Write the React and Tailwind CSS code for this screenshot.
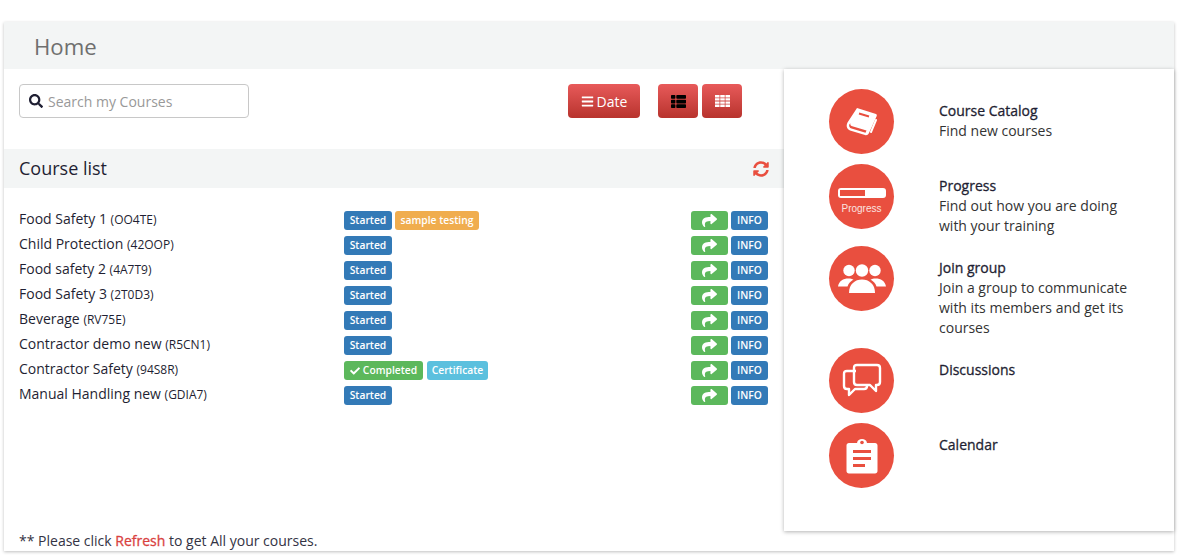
import { FaBars, FaCheck, FaSearch, FaShare, FaSyncAlt, FaThList } from 'react-icons/fa'

const courses = [
  { name: 'Food Safety 1', code: 'OO4TE', extra: 'sample' },
  { name: 'Child Protection', code: '42OOP' },
  { name: 'Food safety 2', code: '4A7T9' },
  { name: 'Food Safety 3', code: '2T0D3' },
  { name: 'Beverage', code: 'RV75E' },
  { name: 'Contractor demo new', code: 'R5CN1' },
  { name: 'Contractor Safety', code: '94S8R', completed: true },
  { name: 'Manual Handling new', code: 'GDIA7' },
]

function Badge({ className, children }) {
  return (
    <span className={`h-[19px] flex items-center justify-center rounded-[3px] text-[10.300px] font-semibold text-white ${className}`}>
      {children}
    </span>
  )
}

function CourseRow({ course }) {
  return (
    <div className="h-[25px] flex items-start">
      <div className="w-[325px] pt-[1px] text-[14px] leading-[20px] text-[#1f1f33]">
        {course.name} <span className="text-[12px]">({course.code})</span>
      </div>
      <div className="flex-1 flex gap-[3px] pt-[3px]">
        {course.completed ? (
          <>
            <Badge className="w-[79px] gap-[3px] bg-[#5cb85c]"><FaCheck className="text-[10px]" />Completed</Badge>
            <Badge className="ml-[1px] w-[61px] bg-[#5bc0de]">Certificate</Badge>
          </>
        ) : (
          <>
            <Badge className="w-[48px] bg-[#337ab7]">Started</Badge>
            {course.extra && <Badge className="w-[84px] bg-[#f0ad4e]">sample testing</Badge>}
          </>
        )}
      </div>
      <div className="flex gap-[3px] pt-[3px]">
        <Badge className="w-[37px] bg-[#5cb85c]"><FaShare className="text-[15px]" /></Badge>
        <Badge className="w-[37px] bg-[#337ab7]">INFO</Badge>
      </div>
    </div>
  )
}

function BookIcon() {
  return (
    <svg width="34" height="32" viewBox="0 0 34 32" fill="none">
      <path d="M12 2 L31 8 C32 8.500 32 9.500 31.500 10.500 L24 27 C23 29 21.500 29.500 20 29 L5 24.500 C1.500 23 1 19.500 2.500 16.500 Z" fill="white" />
      <path d="M4.500 18 C3.500 20 4.500 22 6.500 22.600 L20.500 26.800 L21.500 24.500 L6.500 20 C5.500 19.600 5 18.800 5.500 17.500 Z" fill="#e94f3f" />
      <path d="M14 7.500 L24 10.500" stroke="#e94f3f" strokeWidth="2" />
      <path d="M26 26 L31 14" stroke="white" strokeWidth="2" strokeLinecap="round" />
    </svg>
  )
}

function TableIcon() {
  return (
    <svg width="15" height="12" viewBox="0 0 15 12" fill="white">
      <path d="M0 0 H4.500 V2.500 H0 Z M5.250 0 H9.750 V2.500 H5.250 Z M10.500 0 H15 V2.500 H10.500 Z" />
      <path d="M0 3.200 H4.500 V5.600 H0 Z M5.250 3.200 H9.750 V5.600 H5.250 Z M10.500 3.200 H15 V5.600 H10.500 Z" />
      <path d="M0 6.400 H4.500 V8.800 H0 Z M5.250 6.400 H9.750 V8.800 H5.250 Z M10.500 6.400 H15 V8.800 H10.500 Z" />
      <path d="M0 9.500 H4.500 V12 H0 Z M5.250 9.500 H9.750 V12 H5.250 Z M10.500 9.500 H15 V12 H10.500 Z" />
    </svg>
  )
}

function ProgressIcon() {
  return (
    <div className="flex flex-col items-center">
      <div className="w-[48px] h-[10px] rounded-[3px] bg-white p-[2px] mt-[10px]">
        <div className="w-[25px] h-full bg-[#e94f3f]" />
      </div>
      <div className="mt-[5px] text-[10px] leading-[12px] text-[#fbe3e0] font-['Liberation_Sans',sans-serif]">Progress</div>
    </div>
  )
}

function GroupIcon() {
  return (
    <svg width="48" height="30" viewBox="0 0 48 30" fill="white">
      <circle cx="11" cy="6.500" r="5.700" />
      <circle cx="24" cy="6.500" r="6.200" />
      <circle cx="37" cy="6.500" r="5.700" />
      <path d="M0 22.500 C1 17 5 14.500 10.500 14.500 C12.500 14.500 14 15 15.500 15.600 C12.500 17.500 10.500 19.500 9.500 22.500 Z" />
      <path d="M48 22.500 C47 17 43 14.500 37.500 14.500 C35.500 14.500 34 15 32.500 15.600 C35.500 17.500 37.500 19.500 38.500 22.500 Z" />
      <path d="M11 29 C11 20 17 15.500 24 15.500 C31 15.500 37 20 37 29 Z" />
    </svg>
  )
}

function ChatIcon() {
  return (
    <svg width="40" height="36" viewBox="0 0 40 36" fill="none" stroke="white" strokeWidth="2.400" strokeLinejoin="round">
      <path d="M14 8 H5 C3 8 2 9 2 11 V23 C2 25 3 26 5 26 H7 V32 L13 26 H22 C24 26 25 25 25 23" />
      <path d="M15 2 H35 C37 2 38 3 38 5 V19 C38 21 37 22 35 22 H34 V28 L28 22 H15 C13 22 12 21 12 19 V5 C12 3 13 2 15 2 Z" />
    </svg>
  )
}

function ClipboardIcon() {
  return (
    <svg width="32" height="36" viewBox="0 0 32 36">
      <path d="M3 5 H11 C11.500 2 13.500 1 16 1 C18.500 1 20.500 2 21 5 H29 C30.500 5 31.500 6 31.500 7.500 V33 C31.500 34.500 30.500 35.500 29 35.500 H3 C1.500 35.500 0.500 34.500 0.500 33 V7.500 C0.500 6 1.500 5 3 5 Z" fill="white" />
      <circle cx="16" cy="4.500" r="1.800" fill="#e94f3f" />
      <path d="M7 12 H25 V15 H7 Z M7 19 H25 V22 H7 Z M7 26 H19 V29 H7 Z" fill="#e94f3f" />
    </svg>
  )
}

const links = [
  { h: 'h-[75px]', icon: <BookIcon />, title: 'Course Catalog', lines: ['Find new courses'] },
  { h: 'h-[82px]', icon: <ProgressIcon />, title: 'Progress', lines: ['Find out how you are doing', 'with your training'] },
  { h: 'h-[102px]', icon: <GroupIcon />, title: 'Join group', lines: ['Join a group to communicate', 'with its members and get its', 'courses'] },
  { h: 'h-[75px]', icon: <ChatIcon />, title: 'Discussions', lines: [] },
  { h: 'h-[75px]', icon: <ClipboardIcon />, title: 'Calendar', lines: [] },
]

export default function App() {
  return (
    <div className="h-[560px] bg-white pt-[22px] pl-1 font-['Open_Sans',sans-serif] overflow-hidden">
      <div className="w-[1170px] h-[529px] shadow-[0_1px_3px_rgba(0,0,0,0.25)]">
        <div className="h-[47px] bg-[#f3f5f5] pl-[30px] text-[22.200px] leading-[49px] text-[#6f6f6f]">Home</div>
        <div className="flex items-start">
          {/* Left column */}
          <div className="w-[780px] h-[482px] flex flex-col">
            <div className="h-[80px] flex items-start pl-[15px] pt-[15px]">
              <div className="w-[230px] h-[34px] flex items-center gap-[5px] pl-[9px] border border-[#c8c8c8] rounded-[4px]">
                <FaSearch className="text-[14px] text-[#1f1f33]" />
                <span className="text-[14px] text-[#999999]">Search my Courses</span>
              </div>
              <button className="ml-[319px] w-[72px] h-[34px] flex items-center justify-center gap-[3px] rounded-[4px] bg-linear-to-b from-[#e85a5a] to-[#b8332d] text-white text-[14px]">
                <FaBars className="text-[13px]" />Date
              </button>
              <button className="ml-[18px] w-[40px] h-[34px] flex items-center justify-center rounded-[4px] bg-linear-to-b from-[#e85a5a] to-[#b8332d] text-black text-[15px]">
                <FaThList />
              </button>
              <button className="ml-[4px] w-[40px] h-[34px] flex items-center justify-center rounded-[4px] bg-linear-to-b from-[#e85a5a] to-[#b8332d]">
                <TableIcon />
              </button>
            </div>
            <div className="h-[39px] flex items-center justify-between bg-[#f3f5f5] pl-[15px] pr-[15px]">
              <span className="text-[18px] text-[#1f1f33]">Course list</span>
              <FaSyncAlt className="text-[16px] text-[#e94f3f]" />
            </div>
            <div className="pt-[20px] pl-[15px] pr-[16px] flex-1">
              {courses.map((c) => <CourseRow key={c.code} course={c} />)}
            </div>
            <div className="pl-[15px] h-[20px] text-[14px] leading-[20px] text-[#333344]">
              ** Please click <span className="[-webkit-text-stroke:0.3px] text-[#d9423f]">Refresh</span> to get All your courses.
            </div>
          </div>

          {/* Right column */}
          <div className="w-[390px] h-[462px] pt-[20px] pl-[45px] shadow-[0_1px_4px_rgba(0,0,0,0.3)] bg-white">
            {links.map((l) => (
              <div key={l.title} className={`${l.h} flex items-start`}>
                <div className="w-[65px] h-[65px] shrink-0 rounded-full bg-[#e94f3f] flex items-center justify-center">
                  {l.icon}
                </div>
                <div className="ml-[45px] pt-[12px] text-[14px] leading-[20px] text-[#333333]">
                  <div className="[-webkit-text-stroke:0.3px] text-[#1f1f33]">{l.title}</div>
                  {l.lines.map((t) => <div key={t}>{t}</div>)}
                </div>
              </div>
            ))}
          </div>
        </div>
      </div>
    </div>
  )
}
